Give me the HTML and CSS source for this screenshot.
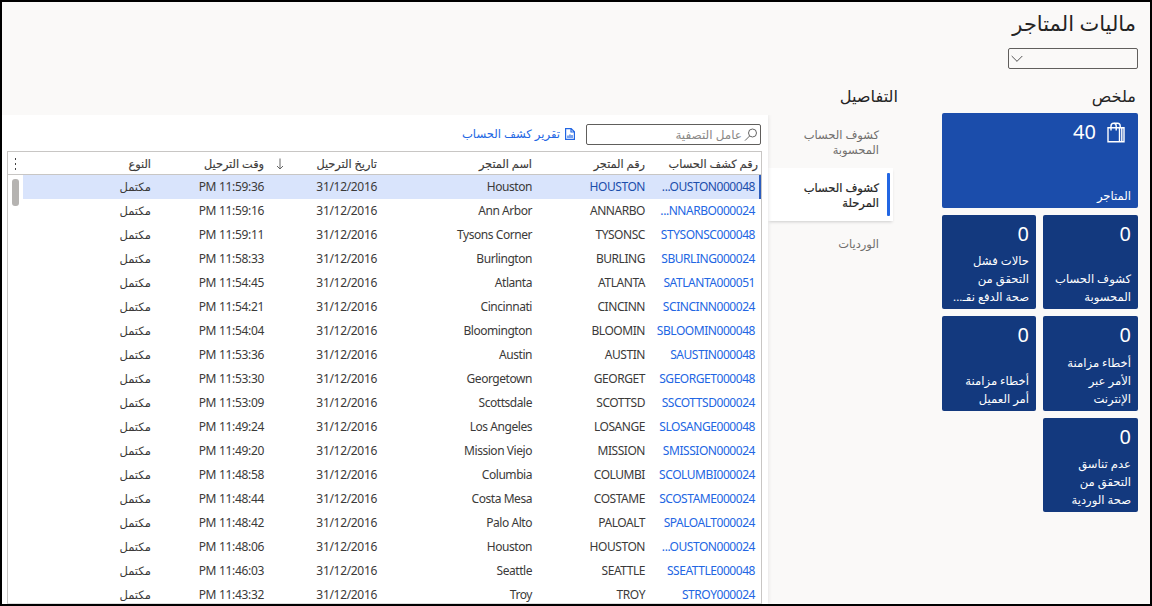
FILE: index.html
```html
<!DOCTYPE html>
<html lang="ar" dir="rtl">
<head>
<meta charset="utf-8">
<title>ماليات المتاجر</title>
<link rel="stylesheet" href="styles.css">
</head>
<body>
<div class="page">
  <header class="top">
    <h1>ماليات المتاجر</h1>
    <div class="combo"><svg width="12" height="8" viewBox="0 0 12 8"><path d="M.7 1 6 6.3 11.3 1" fill="none" stroke="#555" stroke-width="1"/></svg></div>
  </header>
  <main class="main">
    <section class="summary">
      <h2>ملخص</h2>
      <div class="tiles">
        <div class="tile wide">
          <div class="count"><svg width="18" height="21" viewBox="0 0 18 21" fill="none" stroke="#fff" stroke-width="1.4"><path d="M1 5.700h11.500v14H1zM12.500 5.700h4.500v14h-4.500M14.800 5.700v14M4 8.500V4Q4 1.200 6.600 1.200T9.200 4V8.500M7 1.200h3.500Q13.200 1.200 13.200 4v1.500"/></svg><span>40</span></div>
          <div class="label">المتاجر</div>
        </div>
        <div class="tile"><div class="count">0</div><div class="label">كشوف الحساب<br>المحسوبة</div></div>
        <div class="tile"><div class="count">0</div><div class="label">حالات فشل<br>التحقق من<br>صحة الدفع نقـ...</div></div>
        <div class="tile"><div class="count">0</div><div class="label">أخطاء مزامنة<br>الأمر عبر<br>الإنترنت</div></div>
        <div class="tile"><div class="count">0</div><div class="label">أخطاء مزامنة<br>أمر العميل</div></div>
        <div class="tile"><div class="count">0</div><div class="label">عدم تناسق<br>التحقق من<br>صحة الوردية</div></div>
      </div>
    </section>
    <section class="details">
      <h2>التفاصيل</h2>
      <div class="split">
        <nav class="tabs">
          <div class="tab">كشوف الحساب<br>المحسوبة</div>
          <div class="tab active">كشوف الحساب<br>المرحلة</div>
          <div class="tab last">الورديات</div>
        </nav>
        <div class="panel">
          <div class="toolbar">
            <div class="filter"><svg width="14" height="14" viewBox="0 0 14 14" fill="none" stroke="#666"><circle cx="8.500" cy="5" r="4"/><path d="M5.600 8 1 12.600"/></svg><span>عامل التصفية</span></div>
            <div class="report"><svg width="10" height="12" viewBox="0 0 10 12" fill="none" stroke="#2266e3" stroke-width="1.200"><path d="M.6.6h5.600l3.200 3.200v7.600H.6zM6 .6V4h3.400M3 10V7.500M5 10V6.500M7 10V7"/></svg><span>تقرير كشف الحساب</span></div>
          </div>
          <div class="grid">
            <div class="row head">
              <div>رقم كشف الحساب</div><div>رقم المتجر</div><div>اسم المتجر</div><div>تاريخ الترحيل<svg class="sort" width="8" height="12" viewBox="0 0 8 12" fill="none" stroke="#666"><path d="M4 .5v10.500M1 8l3 3 3-3"/></svg></div><div>وقت الترحيل</div><div>النوع</div><div class="more"><i></i><i></i><i></i></div>
            </div>
            <div class="body">
              <div class="rows">
                <div class="row selected"><div>...OUSTON000048</div><div>HOUSTON</div><div>Houston</div><div>31/12/2016</div><div>PM 11:59:36</div><div>مكتمل</div></div>
                <div class="row"><div>...NNARBO000024</div><div>ANNARBO</div><div>Ann Arbor</div><div>31/12/2016</div><div>PM 11:59:16</div><div>مكتمل</div></div>
                <div class="row"><div>STYSONSC000048</div><div>TYSONSC</div><div>Tysons Corner</div><div>31/12/2016</div><div>PM 11:59:11</div><div>مكتمل</div></div>
                <div class="row"><div>SBURLING000024</div><div>BURLING</div><div>Burlington</div><div>31/12/2016</div><div>PM 11:58:33</div><div>مكتمل</div></div>
                <div class="row"><div>SATLANTA000051</div><div>ATLANTA</div><div>Atlanta</div><div>31/12/2016</div><div>PM 11:54:45</div><div>مكتمل</div></div>
                <div class="row"><div>SCINCINN000024</div><div>CINCINN</div><div>Cincinnati</div><div>31/12/2016</div><div>PM 11:54:21</div><div>مكتمل</div></div>
                <div class="row"><div>SBLOOMIN000048</div><div>BLOOMIN</div><div>Bloomington</div><div>31/12/2016</div><div>PM 11:54:04</div><div>مكتمل</div></div>
                <div class="row"><div>SAUSTIN000048</div><div>AUSTIN</div><div>Austin</div><div>31/12/2016</div><div>PM 11:53:36</div><div>مكتمل</div></div>
                <div class="row"><div>SGEORGET000048</div><div>GEORGET</div><div>Georgetown</div><div>31/12/2016</div><div>PM 11:53:30</div><div>مكتمل</div></div>
                <div class="row"><div>SSCOTTSD000024</div><div>SCOTTSD</div><div>Scottsdale</div><div>31/12/2016</div><div>PM 11:53:09</div><div>مكتمل</div></div>
                <div class="row"><div>SLOSANGE000048</div><div>LOSANGE</div><div>Los Angeles</div><div>31/12/2016</div><div>PM 11:49:24</div><div>مكتمل</div></div>
                <div class="row"><div>SMISSION000024</div><div>MISSION</div><div>Mission Viejo</div><div>31/12/2016</div><div>PM 11:49:20</div><div>مكتمل</div></div>
                <div class="row"><div>SCOLUMBI000024</div><div>COLUMBI</div><div>Columbia</div><div>31/12/2016</div><div>PM 11:48:58</div><div>مكتمل</div></div>
                <div class="row"><div>SCOSTAME000024</div><div>COSTAME</div><div>Costa Mesa</div><div>31/12/2016</div><div>PM 11:48:44</div><div>مكتمل</div></div>
                <div class="row"><div>SPALOALT000024</div><div>PALOALT</div><div>Palo Alto</div><div>31/12/2016</div><div>PM 11:48:42</div><div>مكتمل</div></div>
                <div class="row"><div>...OUSTON000024</div><div>HOUSTON</div><div>Houston</div><div>31/12/2016</div><div>PM 11:48:06</div><div>مكتمل</div></div>
                <div class="row"><div>SSEATTLE000048</div><div>SEATTLE</div><div>Seattle</div><div>31/12/2016</div><div>PM 11:46:03</div><div>مكتمل</div></div>
                <div class="row"><div>STROY000024</div><div>TROY</div><div>Troy</div><div>31/12/2016</div><div>PM 11:43:32</div><div>مكتمل</div></div>
              </div>
              <div class="scroll"></div>
            </div>
          </div>
        </div>
      </div>
    </section>
  </main>
</div>
</body>
</html>
```
FILE: styles.css
```css
* { box-sizing: border-box; }
body { margin: 0; font-family: "Noto Sans", "DejaVu Sans", sans-serif; font-size: 12px; color: #3b3a39; }
svg { display: block; flex: none; }
.page { width: 1152px; height: 606px; border: 2px solid #000; background: #faf9f8; overflow: hidden; display: flex; flex-direction: column; }
.top { height: 82px; flex: none; padding: 5px 12px 0; }
h1 { margin: 0 2px 0 0; font-size: 21px; font-weight: 400; line-height: 32px; height: 41px; color: #242424; white-space: nowrap; }
.combo { width: 130px; height: 21px; border: 1px solid #605e5c; border-radius: 2px; display: flex; justify-content: flex-end; align-items: center; padding: 0 2px; }
h2 { margin: 0; font-size: 16.2px; font-weight: 400; line-height: 24px; color: #242424; }
.main { display: flex; flex: 1; min-height: 0; }
.summary { width: 208px; padding-right: 12px; flex: none; }
.summary h2 { padding-right: 2px; height: 29px; }
.tiles { width: 196px; display: grid; grid-template-columns: 95px 94px; gap: 7px; grid-template-rows: 95px 94px 95px 94px; }
.tile { background: #13397e; color: #fff; border-radius: 2px; padding: 7px 7px 3px; display: flex; flex-direction: column; justify-content: space-between; }
.tile.wide { grid-column: span 2; background: #1b4dab; }
.count { font-size: 20px; line-height: 24px; display: flex; gap: 11px; }
.wide .count { padding-right: 6px; align-items: center; }
.label { font-size: 11.6px; line-height: 18px; white-space: nowrap; }
.details { flex: 1; display: flex; flex-direction: column; min-width: 0; }
.details h2 { margin-right: 44px; height: 31px; }
.split { display: flex; flex: 1; min-height: 0; padding-right: 47px; }
.tabs { width: 127px; flex: none; padding-top: 1px; }
.tab { height: 52px; padding: 11px 16px 0 0; font-size: 11.5px; line-height: 15px; color: #706e6c; white-space: nowrap; }
.tab.active { position: relative; height: 53px; margin-right: 2px; padding: 12px 14px 0 0; background: #fff; color: #242424; -webkit-text-stroke: .2px #242424; box-shadow: 0 2px 3px -1px #ccc; }
.tab.active::before { content: ""; position: absolute; right: 3px; top: 5px; width: 3px; height: 43px; border-radius: 1px; background: #2266e3; }
.tab.last { padding-top: 15px; }
.panel { flex: 1; background: #fff; padding: 9px 6px 0 5px; display: flex; flex-direction: column; box-shadow: 0 0 4px #ddd; clip-path: inset(0 -4px 0 0); }
.toolbar { display: flex; gap: 11px; height: 27px; flex: none; padding-right: 1px; }
.filter { width: 175px; height: 21px; border: 1px solid #605e5c; border-radius: 2px; display: flex; align-items: center; padding-right: 2px; gap: 2px; color: #8a8886; white-space: nowrap; }
.report { display: flex; gap: 5px; color: #2266e3; height: 19px; align-items: center; white-space: nowrap; font-size: 11.6px; }
.filter { font-size: 12px; }
.grid { flex: 1; border: 1px solid #c8c6c4; border-bottom-color: #ddd; display: flex; flex-direction: column; min-height: 0; }
.row { display: grid; grid-template-columns: 110px 113px 155px 113px 113px 1fr; height: 24px; line-height: 24px; }
.row > div { padding-right: 6px; direction: ltr; text-align: right; white-space: nowrap; letter-spacing: -.45px; }
.row > div:nth-child(4), .row > div:nth-child(5) { letter-spacing: -.32px; }
.row > div:nth-child(6) { letter-spacing: 0; font-size: 11.6px; }
.row.head { grid-template-columns: 110px 113px 155px 113px 113px 1fr 15px; height: 23px; line-height: 23px; flex: none; border-bottom: 1px solid #c8c6c4; }
.row.head > div { direction: rtl; display: flex; align-items: center; justify-content: space-between; letter-spacing: 0; font-size: 11.3px; -webkit-text-stroke: .15px #3b3a39; }
.row.head > div:first-child { padding-right: 3px; }
.row.head .sort { margin-left: 6px; }
.row.head > .more { flex-direction: column; gap: 3px; justify-content: center; padding: 0; }
.more i { width: 1px; height: 2px; background: #444; }
.body { flex: 1; display: flex; min-height: 0; overflow: hidden; }
.rows { flex: 1; }
.rows .row > div:first-child { color: #2266e3; }
.row.selected { background: #d9e4fc; box-shadow: inset -2px 0 #2d5dbd; }
.rows .selected > div:nth-child(-n+2) { color: #1b4dab; }
.scroll { width: 7px; height: 27px; margin: 4px 4px 0; border-radius: 3px; background: #b5b3b1; flex: none; }
```
